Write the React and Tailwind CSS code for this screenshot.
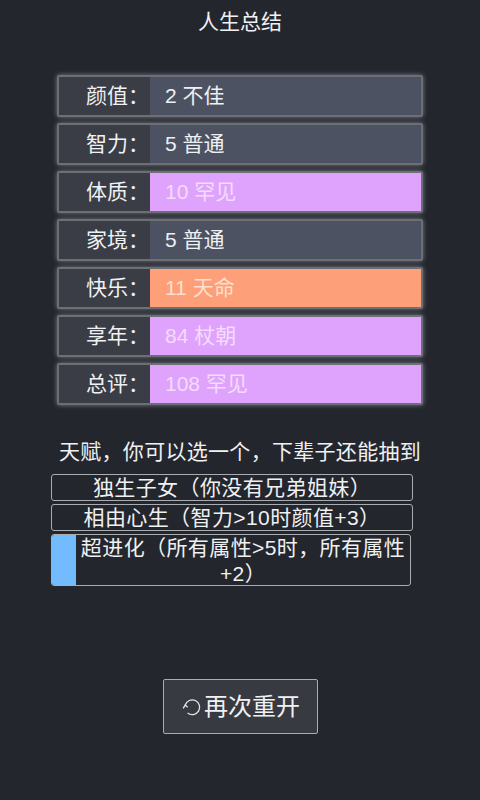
import { useState } from 'react'

const grades = {
    normal: 'bg-[#4d5263] text-[#eef0f2]',
    rare: 'bg-[#e0a3fd] text-[#f3dcfb]',
    legend: 'bg-[#fd9f78] text-[#fbe0cf]',
}

const summary = [
    { label: '颜值', value: '2 不佳', grade: 'normal' },
    { label: '智力', value: '5 普通', grade: 'normal' },
    { label: '体质', value: '10 罕见', grade: 'rare' },
    { label: '家境', value: '5 普通', grade: 'normal' },
    { label: '快乐', value: '11 天命', grade: 'legend' },
    { label: '享年', value: '84 杖朝', grade: 'rare' },
    { label: '总评', value: '108 罕见', grade: 'rare' },
]

const talents = [
    '独生子女（你没有兄弟姐妹）',
    '相由心生（智力>10时颜值+3）',
]

export default function App() {
    const [picked] = useState(2)

    return (
        <div className="w-[480px] h-[800px] overflow-hidden bg-[#24262e] text-[#f0f1f2] flex flex-col items-center font-['Liberation_Sans','Noto_Sans_CJK_SC',sans-serif]">
            <h1 className="mt-[8px] h-[28px] text-[21px] leading-[28px] font-normal">人生总结</h1>

            {/* Summary rows */}
            <div className="mt-[39px] w-[366px] flex flex-col gap-[6px]">
                {summary.map(row => (
                    <div key={row.label} className="h-[42px] flex border-[2px] border-[#6c7075] rounded-[2px] bg-[#3a3d46] shadow-[0_0_5px_rgba(190,195,205,0.55)]">
                        <div className="w-[91px] shrink-0 pr-[1px] text-right text-[21px] leading-[38px]">{row.label}：</div>
                        <div className={`flex-1 pl-[15px] text-[21px] leading-[38px] ${grades[row.grade]}`}>{row.value}</div>
                    </div>
                ))}
            </div>

            {/* Talents */}
            <p className="mt-[33px] h-[28px] text-[21px] leading-[28px] tracking-[0.3px] whitespace-nowrap">天赋，你可以选一个，下辈子还能抽到</p>
            <div className="mt-[8px] mr-[16px] w-[362px] flex flex-col gap-[3px]">
                {talents.map(t => (
                    <div key={t} className="h-[27px] border border-[#a9acb0] rounded-[3px] text-center text-[21px] leading-[25px] tracking-[0.4px] whitespace-nowrap">{t}</div>
                ))}
                <div className="w-[360px] h-[52px] flex border border-[#a9acb0] rounded-[3px] overflow-hidden">
                    {picked === 2 && <div className="w-[24px] shrink-0 bg-[#72bcfe]"></div>}
                    <div className="flex-1 text-center text-[21px] leading-[26px] tracking-[0.4px]">超进化（所有属性&gt;5时，所有属性+2）</div>
                </div>
            </div>

            {/* Restart */}
            <button className="mt-[93px] w-[155px] h-[55px] flex items-center justify-center pl-[2px] gap-[2px] border border-[#a9acb0] rounded-[2px] bg-[#383a42] text-[24px]">
                <svg width="20" height="20" viewBox="0 0 20 20" fill="none" stroke="#e6e7e9" strokeWidth="1.3" className="shrink-0">
                    <path d="M3.2 8A7.4 7.4 0 1 1 5.6 16" />
                    <path d="M1.2 11.4l2 -3.4 2.4 2.2" />
                </svg>
                <span>再次重开</span>
            </button>
        </div>
    )
}
